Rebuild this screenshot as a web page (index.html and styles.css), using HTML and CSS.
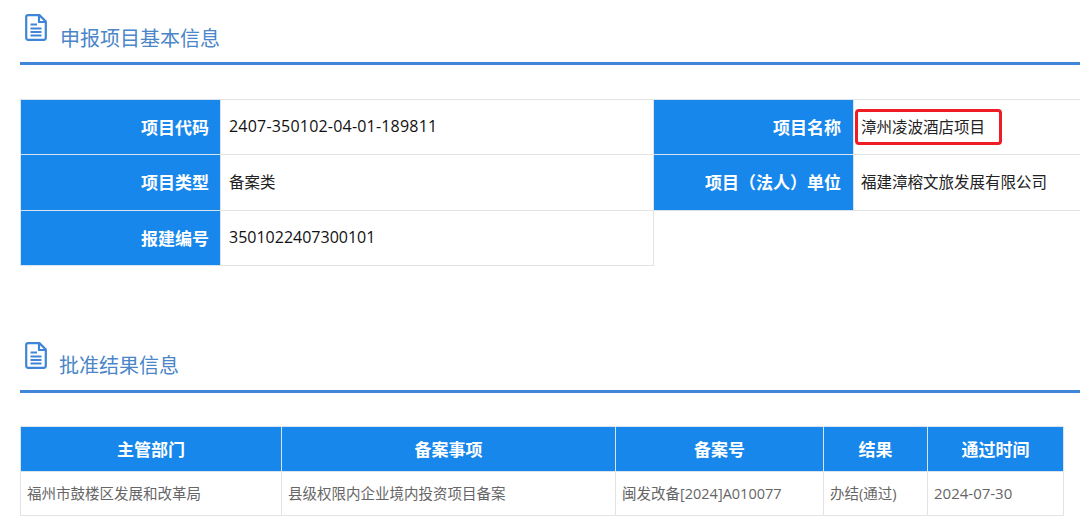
FILE: index.html
```html
<!DOCTYPE html>
<html lang="zh-CN">
<head>
<meta charset="utf-8">
<title>项目信息</title>
<link rel="stylesheet" href="styles.css">
</head>
<body>
<section class="section first">
  <h2 class="heading">
    <svg class="doc" viewBox="0 0 22 27"><path d="M1.2 3.2Q1.2 1.2 3.2 1.2H14.5L20.8 7.5V23.8Q20.8 25.8 18.8 25.8H3.2Q1.2 25.8 1.2 23.8Z M14 1.5V8H20.5 M5.5 10.5H12 M5.5 14.5H16.5 M5.5 18H16.5 M5.5 21.5H16.5"/></svg>
    <span class="title">申报项目基本信息</span>
  </h2>
  <table class="info">
    <colgroup><col class="c1"><col class="c2"><col class="c3"><col class="c4"></colgroup>
    <tr class="r1">
      <th>项目代码</th><td class="code">2407-350102-04-01-189811</td>
      <th class="label2">项目名称</th><td class="marked"><span>漳州凌波酒店项目</span><i class="redbox"></i></td>
    </tr>
    <tr class="r2">
      <th>项目类型</th><td>备案类</td>
      <th class="label2">项目（法人）单位</th><td class="value2">福建漳榕文旅发展有限公司</td>
    </tr>
    <tr class="r3">
      <th>报建编号</th><td class="digits">3501022407300101</td>
      <td class="blank" colspan="2"></td>
    </tr>
  </table>
</section>
<section class="section second">
  <h2 class="heading">
    <svg class="doc" viewBox="0 0 22 27"><path d="M1.2 3.2Q1.2 1.2 3.2 1.2H14.5L20.8 7.5V23.8Q20.8 25.8 18.8 25.8H3.2Q1.2 25.8 1.2 23.8Z M14 1.5V8H20.5 M5.5 10.5H12 M5.5 14.5H16.5 M5.5 18H16.5 M5.5 21.5H16.5"/></svg>
    <span class="title">批准结果信息</span>
  </h2>
  <table class="result">
    <colgroup><col class="d1"><col class="d2"><col class="d3"><col class="d4"><col class="d5"></colgroup>
    <tr class="head"><th>主管部门</th><th>备案事项</th><th>备案号</th><th>结果</th><th>通过时间</th></tr>
    <tr class="row"><td>福州市鼓楼区发展和改革局</td><td>县级权限内企业境内投资项目备案</td><td>闽发改备[2024]A010077</td><td>办结(通过)</td><td class="date">2024-07-30</td></tr>
  </table>
</section>
</body>
</html>
```
FILE: styles.css
```css
* { box-sizing: border-box; }
html, body { margin: 0; padding: 0; background: #fff; overflow: hidden; }
body { width: 1080px; height: 528px; font-family: "Open Sans", "Noto Sans CJK SC", sans-serif; }
.section { margin-left: 20px; }
.first { padding-top: 14px; }
.second { padding-top: 76px; }
.heading { display: flex; align-items: flex-start; height: 51px; margin: 0; padding-left: 5px; border-bottom: 3px solid #3f86d8; font-weight: 400; }
.doc { width: 22px; height: 27px; flex: none; fill: none; stroke: #3f86d8; stroke-width: 2.2; }
.title { margin: 8px 0 0 13px; font-family: "Noto Sans CJK SC", sans-serif; font-size: 20px; line-height: 32px; color: #4a86c8; }
.second .title { margin-left: 12px; margin-top: 7px; }
table { border-collapse: collapse; table-layout: fixed; }
.info { width: 1060px; margin-top: 34px; }
.c1 { width: 200px; } .c2 { width: 433px; } .c3 { width: 200px; } .c4 { width: 227px; }
.r1 { height: 55px; } .r2 { height: 56px; } .r3 { height: 55px; }
.info th { background: #1787ec; border: 1px solid #d9e3ee; color: #fff; font-size: 17px; font-weight: 700; text-align: right; padding: 0 11px 2px 0; font-family: "Noto Sans CJK SC", sans-serif; }
.info th.label2 { padding-right: 12px; }
.info td { border: 1px solid #e3e3e3; font-size: 15.5px; color: #222; padding: 0 0 2px 8px; white-space: nowrap; }
.info td.marked, .info td.value2 { padding-left: 7px; }
.info td.code { font-size: 16px; letter-spacing: 0.2px; color: #111; }
.info td.digits { font-size: 16px; color: #111; }
.info td.blank { border: 0; border-top: 1px solid #e3e3e3; }
.info .marked { position: relative; }
.redbox { position: absolute; left: 1px; top: 9px; width: 147px; height: 36px; border: 3px solid #ee1c25; border-radius: 4px; }
.result { width: 1043px; margin-top: 33px; }
.d1 { width: 261px; } .d2 { width: 334px; } .d3 { width: 208px; } .d4 { width: 104px; } .d5 { width: 136px; }
.head { height: 45px; }
.row { height: 44px; }
.result th { background: #1787ec; border: 1px solid #dde3ea; color: #fff; font-size: 17px; font-weight: 700; text-align: center; padding: 0 0 1px; font-family: "Noto Sans CJK SC", sans-serif; }
.result td { border: 1px solid #e3e3e3; font-size: 14.5px; color: #666; padding: 0 0 2px 6px; white-space: nowrap; }
.result td.date { font-size: 15px; }
```
